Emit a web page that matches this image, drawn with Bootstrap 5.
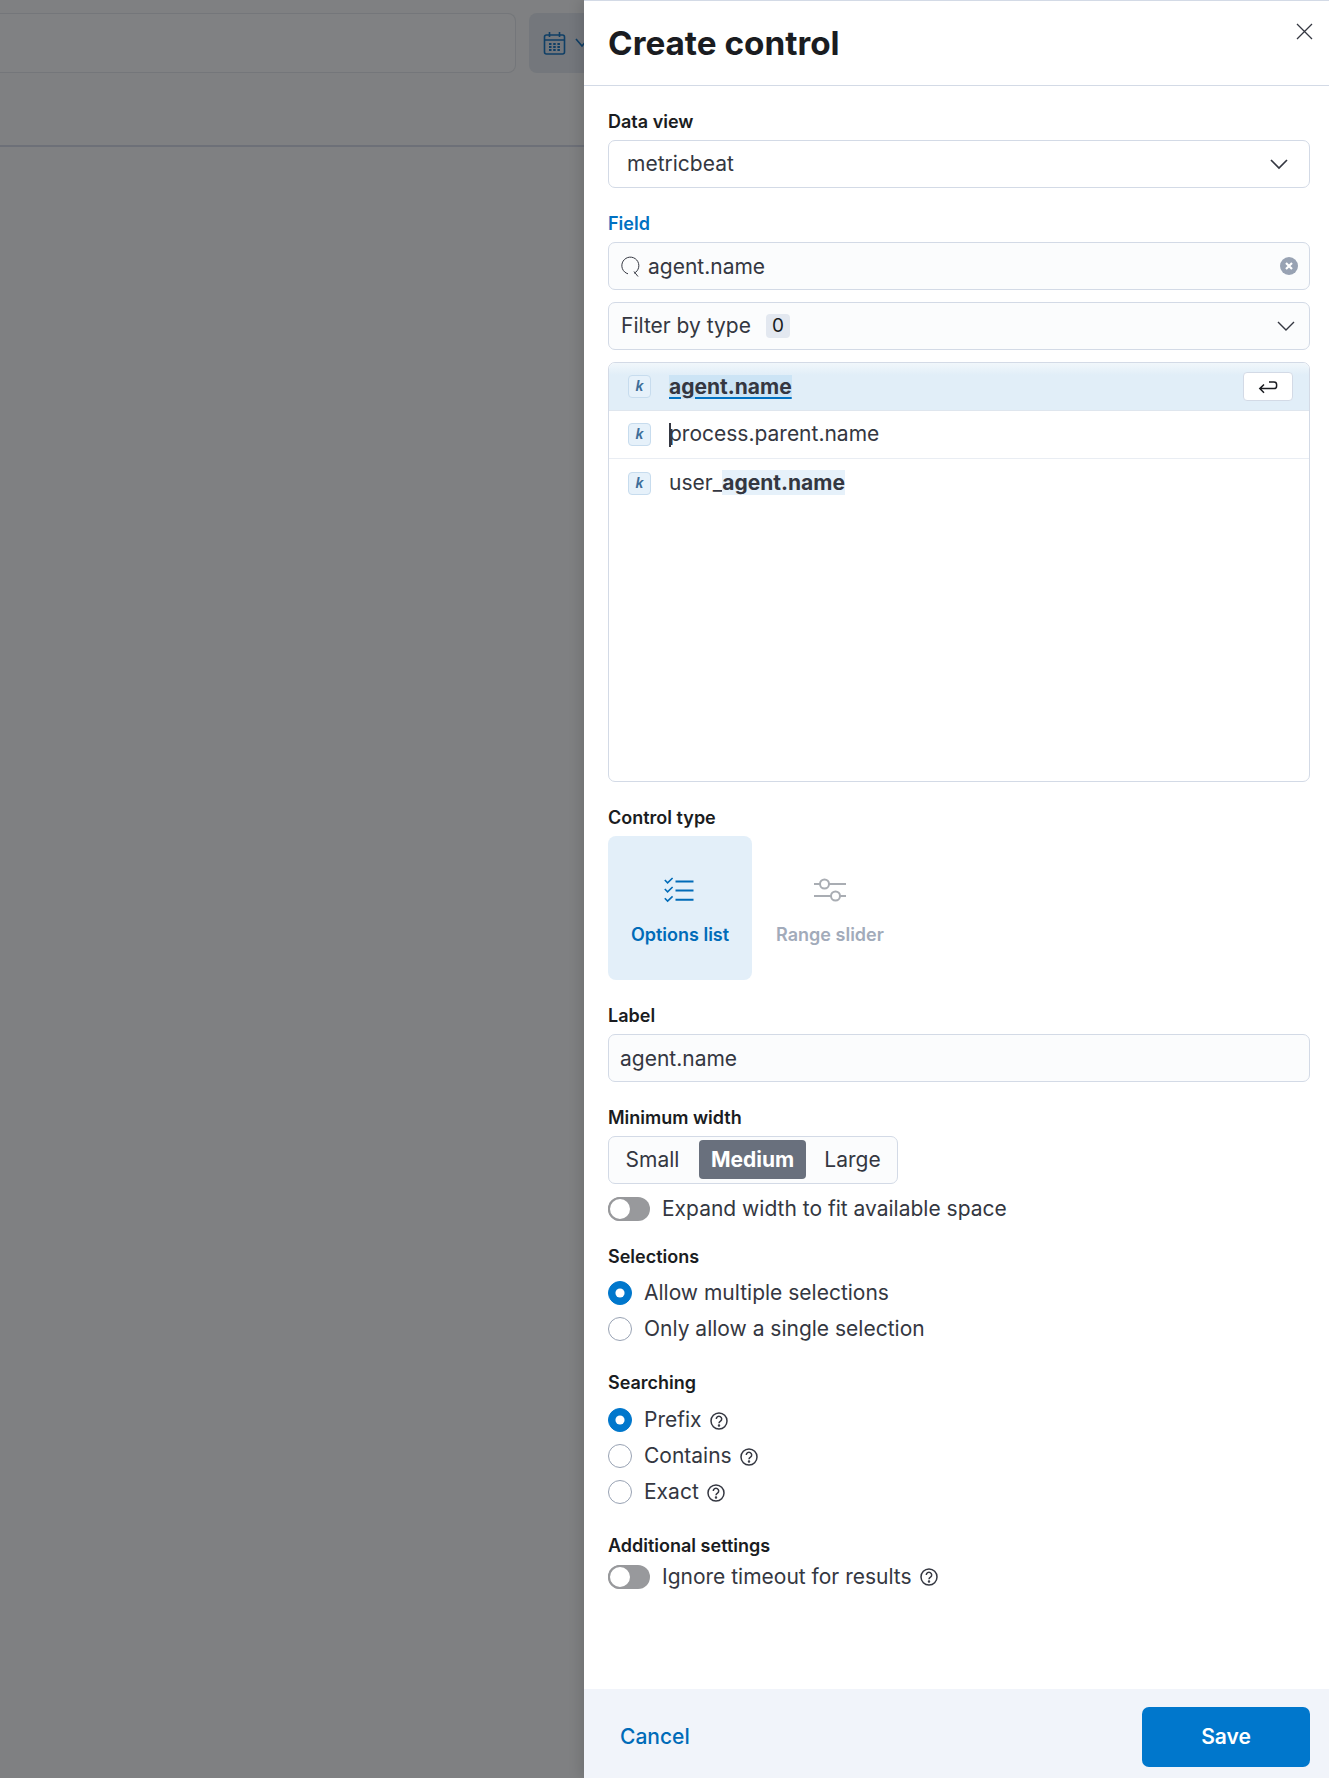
<!DOCTYPE html>
<html lang="en"><head><meta charset="utf-8"><title>Create control</title>
<link href="https://cdn.jsdelivr.net/npm/bootstrap@5.3.0/dist/css/bootstrap.min.css" rel="stylesheet">
<style>
html,body{height:1778px;margin:0;overflow:hidden}
body{font-family:Inter,"Noto Sans",sans-serif;color:#343741;font-size:21px;line-height:24px}
.shell{height:1778px}
.backdrop{width:584px;background:#7f8082;height:100%}
.back-top{height:147px;border-bottom:2px solid #6d7078;padding:13px 0 0}
.back-search{flex:none;width:516px;height:60px;border:1px solid #74767a;border-left:0;border-radius:0 8px 8px 0;background:#808183}
.back-btn{flex:1;height:60px;margin-left:13px;border-radius:8px 0 0 8px;background:#74777c;padding-left:14px}
.flyout{width:745px;height:100%;background:#fff;border-top:1px solid #d3dae6;box-shadow:-4px 0 12px rgba(0,0,0,.12);position:relative}
.fly-head{height:85px;border-bottom:1px solid #d3dae6;padding-left:24px}
.fly-title{font-size:33.3px;font-weight:700;color:#1a1c21;margin:0;line-height:40px}
.fly-close{position:absolute;top:22px;right:16px;background:none;border:0;padding:0;line-height:0}
.fly-body{padding:0 19px 0 24px;flex:1}
.lbl{display:block;font-size:18px;font-weight:600;line-height:20px;color:#1a1c21;margin:0 0 8px}
.lbl-active{color:#0071c2}
.lbl-radios{margin-bottom:14px}
.lbl-radios-b{margin-bottom:15px}
.lbl-switch{margin-bottom:9px}
.sec{margin-top:26px}
.sec-after-radio{margin-top:32px}
.box-line{height:48px;border:1px solid #d3dae6;border-radius:7px;padding:0 12px;font-size:21px;color:#343741;box-shadow:none}
.box-line:focus{box-shadow:none;border-color:#d3dae6;background:#fbfcfd;color:#343741}
.box-white{background:#fff;padding:0 21px 0 18px}
.box-soft{background:#fbfcfd}
.box-input{padding-left:11px}
.box-clear{padding-right:11px}
.box-clear span{position:relative;top:1px}
.box-filter{margin-top:12px;padding-right:14px}
.tok{width:23px;height:23px;background:#e6f1fa;border:1px solid #c7dcee;border-radius:4px;color:#3d6d99;font:italic 700 14px/21px "Liberation Sans",sans-serif;text-align:center;flex:none}
.hit-list{height:420px;border:1px solid #d3dae6;border-radius:7px;overflow:hidden;margin-top:12px}
.hit-row{height:48px;padding:0 16px 0 19px;gap:18px;border-bottom:1px solid #e9edf3}
.hit-row.first{background:linear-gradient(#f1f7fb,#e1eef8 12px);border-bottom-color:#dfe6ee}
.hit-row.last{border-bottom:0}
.hl-strong{background:#cce4f5;font-weight:700;color:#343741;text-decoration:underline;text-decoration-color:#0071c2;text-decoration-thickness:2px;text-underline-offset:3px}
.hl-soft{background:#e6f1fa;font-weight:700;color:#343741}
.text-caret{border-left:2px solid #343741;margin-right:-2px;height:24px;display:inline-block;vertical-align:middle}
.kbd-enter{margin-left:auto;width:50px;height:29px;background:#fff;border:1px solid #d3dae6;border-radius:4px}
.zero{background:#e3e8f0;border-radius:4px;width:24px;height:24px;font-size:19px;color:#1a1c21;line-height:24px;text-align:center;margin-left:15px}
.tile-row{gap:6px}
.tile{width:144px;height:144px;border-radius:8px;font-size:18px;font-weight:600;background:none;border:0;padding:0;display:flex;flex-direction:column;align-items:center;line-height:24px}
.tile-on{background:#e3eff9;color:#006bb8}
.tile-off{color:#a2abba}
.tile-ico{height:34px;margin-top:38px;margin-bottom:15px;display:block}
.tile-on .tile-ico{position:relative;left:-1px}
.seg{width:290px;height:48px;border:1px solid #d3dae6;border-radius:7px;background:#fbfcfd;padding:3px 0 4px}
.seg-item{font-size:21px;color:#343741;background:none;border:0;padding:0;line-height:39px;border-radius:4px;flex:0 0 90px}
.seg-first{padding-right:3px}
.seg-last{flex:1 1 0;padding-left:2px}
.seg-on{background:#69707d;color:#fff;font-weight:700;flex:0 0 107px}
.sw-line{height:24px;margin-top:13px}
.sw-line-tight{margin-top:0}
.sw{width:42px;height:24px;border-radius:12px;background:#98999c;position:relative;flex:none;margin-right:12px}
.sw::after{content:"";position:absolute;left:0;top:0;width:24px;height:24px;border-radius:50%;background:#fff;border:2px solid #98999c}
.rad-line{height:24px;margin-bottom:12px;padding:0;min-height:0;display:flex;align-items:center;gap:12px}
.rad-line .form-check-input{width:24px;height:24px;margin:0;float:none;border:1px solid #98a2b3;flex:none}
.rad-line .form-check-input:checked{background-color:#0077cc;border-color:#0077cc;background-image:url("data:image/svg+xml,%3csvg xmlns='http://www.w3.org/2000/svg' viewBox='-12 -12 24 24'%3e%3ccircle r='5' fill='%23fff'/%3e%3c/svg%3e")}
.rad-line .form-check-label{line-height:24px;margin-right:-4px}
.q-ico{margin-top:2px;flex:none}
.fly-foot{height:89px;background:#f1f4fa;padding:7px 19px 0 36px;flex:none}
.btn-cancel{color:#006bb8;font-size:21px;font-weight:500;padding:0;border:0;background:none}
.btn-save{width:168px;height:60px;background:#0077cc;color:#fff;border:0;border-radius:7px;font-size:21px;font-weight:600;padding:0}
</style></head>
<body>
<div class="shell d-flex">
  <div class="backdrop">
    <div class="back-top d-flex align-items-start">
      <div class="back-search"></div>
      <div class="back-btn d-flex align-items-center gap-2">
        <svg width="23" height="24" viewBox="0 0 23 24" fill="none" stroke="#0f3f66" stroke-width="1.6"><rect x="1.500" y="4" width="20" height="19" rx="2"/><path d="M1.500 9h20M6.500 1v5M16.500 1v5"/><path d="M6 13h11M6 16h11M6 19h11" stroke-dasharray="2.500 1.700" stroke-width="2"/></svg>
        <svg width="16" height="12" viewBox="0 0 16 12" fill="none" stroke="#0f3f66" stroke-width="1.6"><path d="M2 2l6 7 6-7"/></svg>
      </div>
    </div>
  </div>
  <div class="flyout d-flex flex-column">
    <div class="fly-head d-flex align-items-center"><h1 class="fly-title">Create control</h1></div>
    <button class="fly-close" aria-label="Close"><svg width="17" height="17" viewBox="0 0 17 17" fill="none" stroke="#343741" stroke-width="1.3"><path d="M1 1l15 15M16 1L1 16"/></svg></button>
    <div class="fly-body">
      <div class="sec">
        <label class="lbl">Data view</label>
        <div class="box-line box-white d-flex align-items-center justify-content-between"><span>metricbeat</span>
          <svg width="18" height="11" viewBox="0 0 18 11" fill="none" stroke="#343741" stroke-width="1.7"><path d="M1 1l8 8 8-8"/></svg></div>
      </div>
      <div class="sec">
        <label class="lbl lbl-active">Field</label>
        <div class="box-line box-soft box-clear d-flex align-items-center">
          <svg width="19" height="21" viewBox="0 0 19 21" fill="none" stroke="#343741" stroke-width="1" class="me-2 flex-shrink-0"><path d="M7 17.800A8.500 8.500 0 1 1 13 17.300M13 15.500l4 5"/></svg>
          <span>agent.name</span>
          <svg class="ms-auto" width="18" height="18" viewBox="0 0 18 18"><circle cx="9" cy="9" r="9" fill="#98a2b3"/><path d="M6 6l6 6M12 6l-6 6" stroke="#fff" stroke-width="2.200"/></svg>
        </div>
        <div class="box-line box-soft box-filter d-flex align-items-center">
          <span>Filter by type</span><span class="zero">0</span>
          <svg class="ms-auto" width="18" height="11" viewBox="0 0 18 11" fill="none" stroke="#343741" stroke-width="1.4"><path d="M1 1l8 8 8-8"/></svg>
        </div>
        <div class="hit-list">
          <div class="hit-row first d-flex align-items-center"><span class="tok">k</span><span class="hl-strong">agent.name</span>
            <span class="kbd-enter d-flex align-items-center justify-content-center"><svg width="20" height="14" viewBox="0 0 20 14" fill="none" stroke="#1a1c21" stroke-width="1.5"><path d="M11 2h5a2.600 2.600 0 0 1 2.600 2.600V6a2.600 2.600 0 0 1-2.600 2.600H2M6 4.500 1.800 8.600 6 12.700"/></svg></span></div>
          <div class="hit-row d-flex align-items-center"><span class="tok">k</span><span><span class="text-caret"></span>process.parent.name</span></div>
          <div class="hit-row last d-flex align-items-center"><span class="tok">k</span><span>user_<span class="hl-soft">agent.name</span></span></div>
        </div>
      </div>
      <div class="sec">
        <label class="lbl">Control type</label>
        <div class="d-flex tile-row">
          <button class="tile tile-on"><svg class="tile-ico" width="30" height="34" viewBox="0 0 30 34" fill="none" stroke="#006bb8"><path d="M11.500 7.500h18M11.500 16.500h18M11.500 25.800h18" stroke-width="2"/><path d="M.8 6l2.800 2.800L8.600 4M.8 15l2.800 2.800L8.600 13M.8 24.300l2.800 2.800 5-4.800" stroke-width="1.600"/></svg>Options list</button>
          <button class="tile tile-off"><svg class="tile-ico" width="32" height="34" viewBox="0 0 32 34" fill="none" stroke="#a9adb3" stroke-width="2"><path d="M0 10h6M15 10h17M0 22h17M26 22h6"/><circle cx="10.500" cy="10" r="4.500"/><circle cx="21.500" cy="22" r="4.500"/></svg>Range slider</button>
        </div>
      </div>
      <div class="sec">
        <label class="lbl">Label</label>
        <input class="form-control box-line box-soft box-input" value="agent.name" readonly>
      </div>
      <div class="sec">
        <label class="lbl">Minimum width</label>
        <div class="seg d-flex align-items-center" role="group">
          <button class="seg-item seg-first">Small</button><button class="seg-item seg-on">Medium</button><button class="seg-item seg-last">Large</button>
        </div>
        <div class="sw-line d-flex align-items-center"><span class="sw"></span><span>Expand width to fit available space</span></div>
      </div>
      <div class="sec">
        <label class="lbl lbl-radios">Selections</label>
        <div class="form-check rad-line"><input class="form-check-input" type="radio" name="sel" checked><label class="form-check-label">Allow multiple selections</label></div>
        <div class="form-check rad-line"><input class="form-check-input" type="radio" name="sel"><label class="form-check-label">Only allow a single selection</label></div>
      </div>
      <div class="sec-after-radio">
        <label class="lbl lbl-radios-b">Searching</label>
        <div class="form-check rad-line"><input class="form-check-input" type="radio" name="srch" checked><label class="form-check-label">Prefix</label><svg class="q-ico" width="18" height="18" viewBox="0 0 18 18" fill="none" stroke="#343741" stroke-width="1.500"><circle cx="9" cy="9" r="8"/><path d="M6.300 7a2.700 2.700 0 1 1 4.200 2.200C9.500 9.900 9 10.300 9 11.300"/><circle cx="9" cy="13.500" r=".5" fill="#343741"/></svg></div>
        <div class="form-check rad-line"><input class="form-check-input" type="radio" name="srch"><label class="form-check-label">Contains</label><svg class="q-ico" width="18" height="18" viewBox="0 0 18 18" fill="none" stroke="#343741" stroke-width="1.500"><circle cx="9" cy="9" r="8"/><path d="M6.300 7a2.700 2.700 0 1 1 4.200 2.200C9.500 9.900 9 10.300 9 11.300"/><circle cx="9" cy="13.500" r=".5" fill="#343741"/></svg></div>
        <div class="form-check rad-line"><input class="form-check-input" type="radio" name="srch"><label class="form-check-label">Exact</label><svg class="q-ico" width="18" height="18" viewBox="0 0 18 18" fill="none" stroke="#343741" stroke-width="1.500"><circle cx="9" cy="9" r="8"/><path d="M6.300 7a2.700 2.700 0 1 1 4.200 2.200C9.500 9.900 9 10.300 9 11.300"/><circle cx="9" cy="13.500" r=".5" fill="#343741"/></svg></div>
      </div>
      <div class="sec-after-radio">
        <label class="lbl lbl-switch">Additional settings</label>
        <div class="sw-line sw-line-tight d-flex align-items-center"><span class="sw"></span><span>Ignore timeout for results</span>
        <svg class="ms-2" width="18" height="18" viewBox="0 0 18 18" fill="none" stroke="#343741" stroke-width="1.500"><circle cx="9" cy="9" r="8"/><path d="M6.300 7a2.700 2.700 0 1 1 4.200 2.200C9.500 9.900 9 10.300 9 11.300"/><circle cx="9" cy="13.500" r=".5" fill="#343741"/></svg></div>
      </div>
    </div>
    <div class="fly-foot d-flex align-items-center justify-content-between">
      <button class="btn-cancel">Cancel</button>
      <button class="btn-save">Save</button>
    </div>
  </div>
</div>
<script src="https://cdn.jsdelivr.net/npm/bootstrap@5.3.0/dist/js/bootstrap.bundle.min.js"></script>
</body></html>
